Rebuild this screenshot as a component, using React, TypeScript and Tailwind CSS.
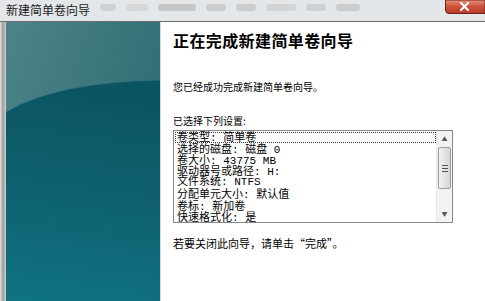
import React from "react";

const cjk = { fontFamily: '"Noto Sans CJK SC", "Noto Sans", sans-serif' };
const mono = { fontFamily: '"Liberation Mono", "Noto Sans CJK SC", monospace' };

function TealPanel() {
  return (
    <div className="relative w-[154px] h-full overflow-hidden">
      <svg width="154" height="279" viewBox="0 0 154 279" className="absolute inset-0">
        <defs>
          <linearGradient id="top" x1="0" y1="0" x2="1" y2="0.6">
            <stop offset="0" stopColor="#4c8488" />
            <stop offset="1" stopColor="#2c6a72" />
          </linearGradient>
          <linearGradient id="bot" x1="0.2" y1="0" x2="0.1" y2="1">
            <stop offset="0" stopColor="#0b5461" />
            <stop offset="0.5" stopColor="#0e6170" />
            <stop offset="1" stopColor="#107381" />
          </linearGradient>
        </defs>
        <rect x="0" y="0" width="154" height="279" fill="url(#top)" />
        <path d="M0,90 Q50,60 154,58 L154,279 L0,279 Z" fill="url(#bot)" />
        <path d="M0,90 Q50,60 154,58" stroke="#3a7a80" strokeWidth="1" fill="none" opacity="0.6" />
      </svg>
    </div>
  );
}

function CloseButton() {
  return (
    <svg width="40" height="14" viewBox="0 0 40 14" className="block shrink-0">
      <defs>
        <linearGradient id="cb" x1="0" y1="0" x2="0" y2="1">
          <stop offset="0" stopColor="#e8907e" />
          <stop offset="0.45" stopColor="#d0553f" />
          <stop offset="1" stopColor="#b8382a" />
        </linearGradient>
      </defs>
      <path d="M0.5,0 L0.5,10 Q0.5,13.5 4,13.5 L40,13.5 L40,0 Z" fill="url(#cb)" stroke="#6e2418" strokeWidth="1" />
      <path d="M16,3 L23,10 M23,3 L16,10" stroke="#ffffff" strokeWidth="2.2" strokeLinecap="round" />
    </svg>
  );
}

function ScrollBar() {
  return (
    <div className="w-[16px] h-full flex flex-col bg-[#f3f3f3] border-l border-[#e6e6e6]">
      <div className="h-[16px] flex items-center justify-center text-[#555] text-[6px] leading-none">▲</div>
      <div className="mx-[1px] h-[42px] rounded-[2px] border border-[#9a9a9a] bg-gradient-to-r from-[#f2f2f2] via-[#e2e2e2] to-[#d6d6d6] flex flex-col items-center justify-center gap-[2px]">
        <div className="w-[6px] h-[1px] bg-[#555]" />
        <div className="w-[6px] h-[1px] bg-[#555]" />
        <div className="w-[6px] h-[1px] bg-[#555]" />
      </div>
      <div className="flex-1" />
      <div className="h-[16px] flex items-center justify-center text-[#555] text-[6px] leading-none">▼</div>
    </div>
  );
}

const rows: { t: string; h: number }[] = [
  { t: "卷类型: 简单卷", h: 11 },
  { t: "选择的磁盘: 磁盘 0", h: 12 },
  { t: "卷大小: 43775 MB", h: 11 },
  { t: "驱动器号或路径: H:", h: 10 },
  { t: "文件系统: NTFS", h: 11 },
  { t: "分配单元大小: 默认值", h: 14 },
  { t: "卷标: 新加卷", h: 11 },
  { t: "快速格式化: 是", h: 11 },
];

export default function App() {
  return (
    <div className="w-[485px] h-[301px] overflow-hidden bg-white flex flex-col" style={cjk}>
      {/* title bar */}
      <div className="h-[22px] w-full shrink-0 flex items-start bg-[#e4e7ea] border-b border-[#6b6b6b]">
        <div className="pl-[6px] pt-[2px] text-[12px] leading-[16px] text-[#1a1a1a] shrink-0">新建简单卷向导</div>
        <div className="flex-1 min-w-0 flex gap-[10px] pl-[10px] pt-[4px] opacity-40 overflow-hidden">
          <div className="w-[16px] h-[7px] shrink-0 rounded-[3px] bg-[#b0b0b0]" />
          <div className="w-[22px] h-[7px] shrink-0 rounded-[3px] bg-[#c0c0c0]" />
          <div className="w-[38px] h-[7px] shrink-0 rounded-[3px] bg-[#989898]" />
          <div className="w-[20px] h-[7px] shrink-0 rounded-[3px] bg-[#a8a8a8]" />
          <div className="w-[20px] h-[7px] shrink-0 rounded-[3px] bg-[#a8a8a8]" />
          <div className="w-[30px] h-[7px] shrink-0 rounded-[3px] bg-[#b8b8b8]" />
          <div className="w-[20px] h-[7px] shrink-0 rounded-[3px] bg-[#b0b0b0]" />
          <div className="w-[24px] h-[7px] shrink-0 rounded-[3px] bg-[#a8a8a8]" />
        </div>
        <CloseButton />
      </div>
      {/* body */}
      <div className="flex flex-1 min-h-0">
        <div className="w-[6px] h-full bg-gradient-to-r from-[#e4e4e4] via-[#9c9c9c] to-[#cfcfcf]" />
        <TealPanel />
        <div className="w-[1px] h-full bg-[#d8d8d8]" />
        <div className="flex-1 pl-[12px] flex flex-col">
          <div className="pt-[8px] text-[16px] leading-[20px] font-bold text-black tracking-[0.4px]">正在完成新建简单卷向导</div>
          <div className="mt-[30px] text-[10px] leading-[14px] text-black">您已经成功完成新建简单卷向导。</div>
          <div className="mt-[20px] text-[10px] leading-[14px] text-black">已选择下列设置:</div>
          <div className="mt-[2px] w-[280px] h-[93px] border border-[#828790] flex overflow-hidden bg-white">
            <div className="flex-1 pl-[1px] pt-[1px] overflow-hidden">
              {rows.map((r, i) => (
                <div
                  key={i}
                  className={`text-[11px] text-black whitespace-nowrap pl-[1px] ${i === 0 ? "border border-dotted border-[#333]" : "border border-transparent"}`}
                  style={{ ...mono, height: r.h, lineHeight: `${r.h}px` }}
                >
                  {r.t}
                </div>
              ))}
            </div>
            <ScrollBar />
          </div>
          <div className="mt-[13px] text-[11px] leading-[14px] text-black">若要关闭此向导，请单击“完成”。</div>
        </div>
      </div>
    </div>
  );
}
